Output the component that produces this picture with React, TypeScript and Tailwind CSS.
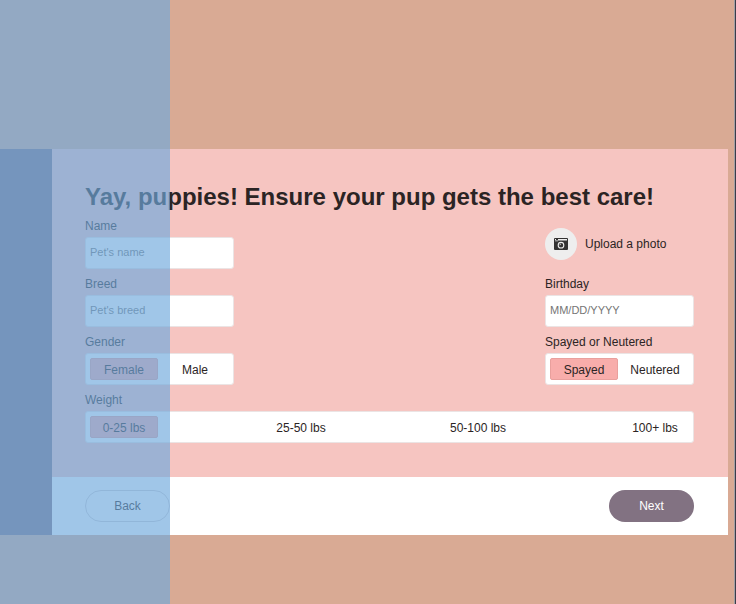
import { useState } from "react";

type ChoiceProps = {
  legend: string;
  name: string;
  options: string[];
};

function Choice({ legend, name, options }: ChoiceProps) {
  const [value, setValue] = useState(options[0]);
  return (
    <fieldset className="min-w-0">
      <legend className="mb-[3px] h-4 leading-4">{legend}</legend>
      <div className="flex h-8 items-center justify-between rounded-[3px] border border-[#ebe4e4] bg-white px-1">
        {options.map((option) => (
          <label key={option} className="relative cursor-pointer">
            <input
              type="radio"
              name={name}
              value={option}
              checked={value === option}
              onChange={() => setValue(option)}
              className="peer sr-only"
            />
            <span className="flex h-[22px] w-[68px] items-center justify-center rounded-xs border border-transparent pt-0.5 peer-checked:border-[#e9a09d] peer-checked:bg-[#f8adab]">
              {option}
            </span>
          </label>
        ))}
      </div>
    </fieldset>
  );
}

type FieldProps = {
  id: string;
  label: string;
  placeholder: string;
};

function Field({ id, label, placeholder }: FieldProps) {
  return (
    <div>
      <label htmlFor={id} className="mb-[3px] block h-4 leading-4">
        {label}
      </label>
      <input
        id={id}
        type="text"
        placeholder={placeholder}
        className="block h-8 w-full rounded-[3px] border border-[#ebe4e4] bg-white px-1 pb-0.5 text-[11px] placeholder:text-[#757575]"
      />
    </div>
  );
}

function CameraIcon() {
  return (
    <svg viewBox="0 0 14 12" className="h-3 w-3.5" aria-hidden="true">
      <rect x="0" y="0" width="14" height="12" rx="1" fill="#333232" />
      <path d="M1 1h1v1H1zM4 1h9v1.6H4zM1 2.4h3v.8H1z" fill="#eeeeee" />
      <circle cx="7" cy="7.2" r="2.8" fill="none" stroke="#eeeeee" strokeWidth="1.1" />
      <path d="M5.8 7.2A1.3 1.3 0 0 1 7 6" fill="none" stroke="#eeeeee" strokeWidth="0.8" />
    </svg>
  );
}

export default function App() {
  return (
    <div className="relative flex min-h-screen flex-col border-r border-[#3c3c48] bg-[#d9aa94] pt-[149px] font-['Liberation_Sans',Arial,sans-serif] text-xs text-[#2b2424] shadow-[inset_-1px_0_#a3a0a4]">
      <div className="mr-[7px] flex">
        <div className="w-[52px] shrink-0 bg-[#807080]" />
        <form className="flex-1" onSubmit={(e) => e.preventDefault()}>
          <div className="bg-[#f6c5c1] py-[34px] pr-[34px] pl-[33px]">
            <h1 className="mb-[7px] text-2xl leading-7 font-bold">
              Yay, puppies! Ensure your pup gets the best care!
            </h1>
            <div className="flex justify-between">
              <div className="flex w-[149px] flex-col gap-[7px]">
                <Field id="name" label="Name" placeholder="Pet's name" />
                <Field id="breed" label="Breed" placeholder="Pet's breed" />
                <Choice legend="Gender" name="gender" options={["Female", "Male"]} />
              </div>
              <div className="flex w-[149px] flex-col gap-[7px]">
                <button type="button" className="flex h-[51px] items-center gap-2">
                  <span className="flex size-8 items-center justify-center rounded-full bg-[#eeeeee]">
                    <CameraIcon />
                  </span>
                  Upload a photo
                </button>
                <Field id="birthday" label="Birthday" placeholder="MM/DD/YYYY" />
                <Choice legend="Spayed or Neutered" name="fixed" options={["Spayed", "Neutered"]} />
              </div>
            </div>
            <div className="mt-[7px]">
              <Choice
                legend="Weight"
                name="weight"
                options={["0-25 lbs", "25-50 lbs", "50-100 lbs", "100+ lbs"]}
              />
            </div>
          </div>
          <div className="flex justify-between bg-white py-[13px] pr-[34px] pl-[33px]">
            <button type="button" className="h-8 w-[85px] rounded-full border border-[#d4d0d4]">
              Back
            </button>
            <button type="submit" className="h-8 w-[85px] rounded-full bg-[#827282] text-white">
              Next
            </button>
          </div>
        </form>
      </div>
      <div className="pointer-events-none absolute inset-y-0 left-0 w-[170px] bg-[#6fa8dc]/66" />
    </div>
  );
}
